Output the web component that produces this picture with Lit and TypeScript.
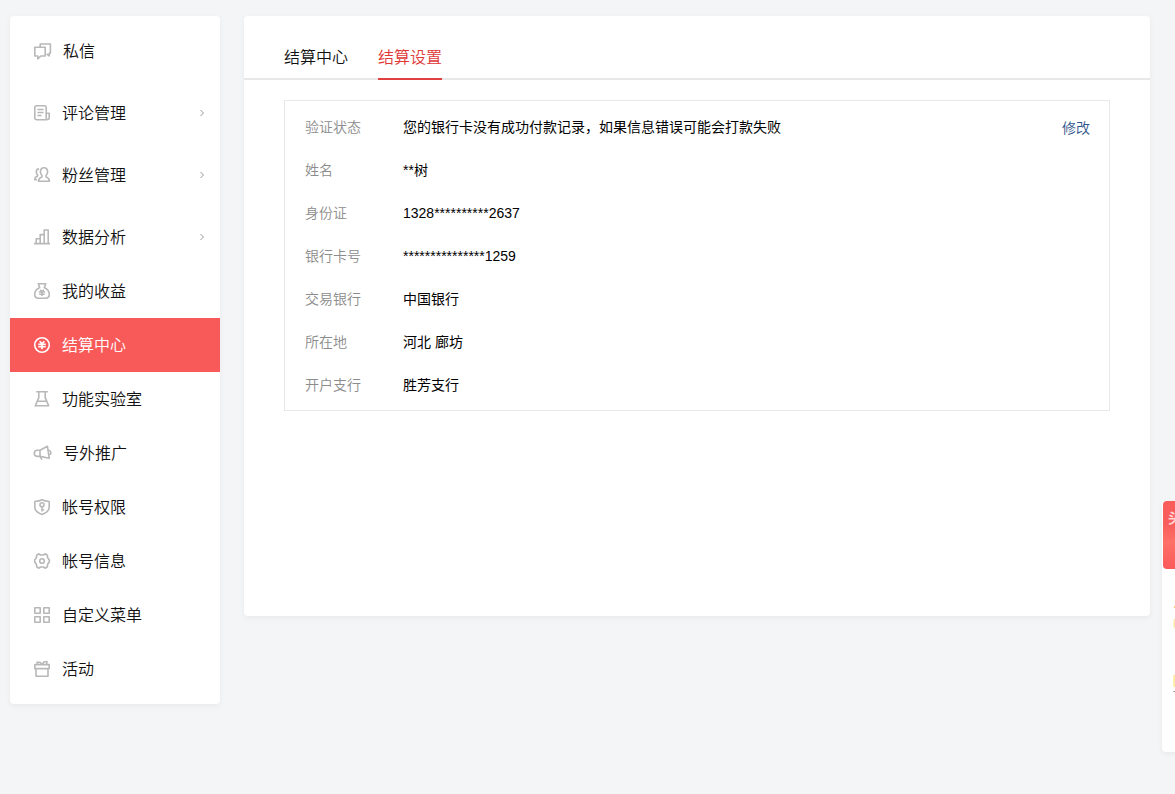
import { LitElement, html, svg, css } from "lit";
import { customElement, property, state } from "lit/decorators.js";
import { classMap } from "lit/directives/class-map.js";

const icons = {
  message: svg`<path d="M6.200 4.200V1H16.400V10.200H15.200V13L12.600 10.900"/><path d="M.8 4.200H11.200V13H6.800L3.800 15.800V13H.8Z"/>`,
  comment: svg`<path d="M13.200 14.700H2.400A1.600 1.600 0 0 1 .8 13.100V2.400A1.600 1.600 0 0 1 2.400.8H10.600A1.600 1.600 0 0 1 12.200 2.400V13A1.500 1.500 0 0 0 15.200 13V8.200H12.200"/><path d="M3.400 4.500H9.600M3.400 7.500H9.600M3.400 10.500H7.600"/>`,
  fans: svg`<path d="M10 .8C7.600.8 6.400 2.400 6.400 4.700C6.400 6.600 7.100 7.700 8 8.500V9.800C6 10.700 4.500 11.600 4.500 14.200H15.400C15.400 11.600 14 10.700 12 9.800V8.500C13 7.700 13.600 6.600 13.600 4.700C13.600 2.400 12.400.8 10 .8Z"/><path d="M5 1.900C3.200 1.900 2.300 3.200 2.300 5C2.300 6.300 2.800 7.300 3.600 8V8.900C1.700 9.700.7 10.500.7 12.800H3"/>`,
  chart: svg`<path d="M0 14.600H16M2.200 14.600V9.800H6.200M6.200 14.600V5.600H10.200M10.200 14.600V1H14.200V14.600"/>`,
  income: svg`<path d="M4.300.8H11.700L10.300 4.600C13 5.800 15.300 8.400 15.300 11.600C15.300 14 13.900 15.200 11.600 15.200H4.400C2.100 15.200.7 14 .7 11.600C.7 8.400 3 5.800 5.700 4.600Z"/><path d="M6.200 6.800L8 8.700L9.800 6.800M4.800 9H11.200M5.200 11.200H10.800M8 9V13"/>`,
  settle: svg`<circle cx="8" cy="8" r="7.300"/><path d="M5.600 4.200L8 6.800L10.400 4.200M4.200 7.200H11.800M4.200 9.600H11.800M8 7V12.200"/>`,
  lab: svg`<path d="M2.200.8H13.800M4.800.8V6.600L1.300 14.800H14.700L11.200 6.600V.8M3.400 10.200H12.600"/>`,
  promote: svg`<path d="M13.400 1.200L6 5.200H3.600A3.100 3.100 0 0 0 3.200 11.400H6.200L15.200 13.200Z"/><path d="M6 5.400V11.200M6.400 11.600L7.800 14.800M14.400 5.200A2.300 2.300 0 0 1 15.200 9.700"/>`,
  shield: svg`<path d="M8 .8C10 2 12.400 2.400 15.200 2.500V8C15.200 11.700 12 14 8 15.400C4 14 .8 11.700 .8 8V2.500C3.600 2.400 6 2 8 .8Z"/><circle cx="8" cy="5.800" r="2"/><path d="M8 7.800V12.400M8 10.800H10.200"/>`,
  gear: svg`<path d="M4.900.8L6.500 2H9.500L11.100.8L13.400 2.200L13.500 4.600L15.300 7V9L13.500 11.400L13.400 13.800L11.100 15.200L9.500 14H6.500L4.900 15.200L2.600 13.800L2.500 11.400L.7 9V7L2.500 4.600L2.600 2.200Z"/><circle cx="8" cy="8" r="2.300"/>`,
  grid: svg`<path d="M.8.800H6.200V6.200H.8ZM9.800.800H15.200V6.200H9.800ZM.8 9.800H6.200V15.200H.8ZM9.800 9.800H15.200V15.200H9.800Z"/>`,
  gift: svg`<path d="M.8 3.600H15.200V7.600H.8ZM2 7.600V15.200H14V7.600M4 3.600L3 1.200H6L8 3.600L10 .8H13L12.400 3.600"/>`,
};

type IconName = keyof typeof icons;

interface NavEntry {
  icon: IconName;
  label: string;
  group?: boolean;
  spaced?: boolean;
  wide?: boolean;
}

const NAV: NavEntry[] = [
  { icon: "message", label: "私信", spaced: true, wide: true },
  { icon: "comment", label: "评论管理", group: true, spaced: true },
  { icon: "fans", label: "粉丝管理", group: true, spaced: true },
  { icon: "chart", label: "数据分析", group: true },
  { icon: "income", label: "我的收益" },
  { icon: "settle", label: "结算中心" },
  { icon: "lab", label: "功能实验室" },
  { icon: "promote", label: "号外推广", wide: true },
  { icon: "shield", label: "帐号权限" },
  { icon: "gear", label: "帐号信息" },
  { icon: "grid", label: "自定义菜单" },
  { icon: "gift", label: "活动" },
];

const DETAILS: [string, string][] = [
  ["验证状态", "您的银行卡没有成功付款记录，如果信息错误可能会打款失败"],
  ["姓名", "**树"],
  ["身份证", "1328**********2637"],
  ["银行卡号", "***************1259"],
  ["交易银行", "中国银行"],
  ["所在地", "河北 廊坊"],
  ["开户支行", "胜芳支行"],
];

@customElement("side-nav")
class SideNav extends LitElement {
  @property() current = "结算中心";

  static styles = css`
    :host {
      display: block;
    }
    .nav {
      padding: 8px 0;
      background: #fff;
      border-radius: 4px;
      box-shadow: 0 2px 6px rgba(0, 0, 0, 0.05);
    }
    .item {
      display: flex;
      align-items: center;
      gap: 12px;
      height: 54px;
      padding: 0 14px 0 24px;
      color: #111;
      font-size: 16px;
      font-weight: 350;
      text-decoration: none;
    }
    .spaced {
      margin-bottom: 8px;
    }
    .active {
      background: #f85959;
      color: #fff;
    }
    .icon {
      flex: none;
      width: 16px;
      height: 16px;
      overflow: visible;
      fill: none;
      stroke: #b8b8b8;
      stroke-width: 1.6;
      stroke-linejoin: round;
    }
    .wide {
      width: 17px;
    }
    .active .icon {
      stroke: #fff;
    }
    .label {
      flex: 1;
      padding-bottom: 2px;
    }
    .arrow {
      width: 8px;
      height: 8px;
      fill: none;
      stroke: #999;
    }
  `;

  render() {
    return html`<nav class="nav">
      ${NAV.map(
        (n) => html`<a
          href="#"
          class=${classMap({ item: true, spaced: !!n.spaced, active: n.label === this.current })}
        >
          <svg
            class=${classMap({ icon: true, wide: !!n.wide })}
            viewBox=${n.wide ? "0 0 17 16" : "0 0 16 16"}
            aria-hidden="true"
          >${icons[n.icon]}</svg>
          <span class="label">${n.label}</span>
          ${n.group
            ? html`<svg class="arrow" viewBox="0 0 8 8" aria-hidden="true"><path d="M2.500 1L5.500 4L2.500 7" /></svg>`
            : ""}
        </a>`
      )}
    </nav>`;
  }
}

@customElement("settle-panel")
class SettlePanel extends LitElement {
  @state() private tab = "结算设置";

  static styles = css`
    :host {
      display: block;
      min-height: 600px;
      background: #fff;
      border-radius: 4px;
      box-shadow: 0 2px 6px rgba(0, 0, 0, 0.05);
    }
    .tabs {
      display: flex;
      gap: 30px;
      padding: 20px 40px 0;
      box-shadow: inset 0 -2px #e8e8e8;
    }
    .tab {
      height: 44px;
      padding: 0 0 2px;
      border: 0;
      border-bottom: 2px solid transparent;
      background: none;
      color: #111;
      font: inherit;
      font-size: 16px;
      font-weight: 350;
      cursor: pointer;
    }
    .selected {
      border-color: #e04040;
      color: #e03838;
    }
    .card {
      display: flex;
      align-items: flex-start;
      margin: 20px 40px;
      padding: 4px 19px 4px 20px;
      border: 1px solid #e8e8e8;
    }
    .list {
      flex: 1;
      margin: 0;
    }
    .row {
      display: flex;
      align-items: center;
      height: 43px;
      font-size: 14px;
      line-height: 20px;
    }
    .term {
      width: 98px;
      color: #8c8c8c;
      font-weight: 350;
    }
    .value {
      margin: 0;
      color: #000;
    }
    .edit {
      color: #30558c;
      font-size: 14px;
      font-weight: 350;
      line-height: 46px;
      text-decoration: none;
    }
  `;

  render() {
    return html`
      <div class="tabs" role="tablist">
        ${["结算中心", "结算设置"].map(
          (t) => html`<button
            role="tab"
            aria-selected=${t === this.tab}
            class=${classMap({ tab: true, selected: t === this.tab })}
            @click=${() => (this.tab = t)}
          >${t}</button>`
        )}
      </div>
      <div class="card">
        <dl class="list">
          ${DETAILS.map(
            ([k, v]) => html`<div class="row"><dt class="term">${k}</dt><dd class="value">${v}</dd></div>`
          )}
        </dl>
        <a class="edit" href="#">修改</a>
      </div>
    `;
  }
}

@customElement("app-root")
class AppRoot extends LitElement {
  static styles = css`
    :host {
      display: block;
      position: relative;
      box-sizing: border-box;
      min-height: 100vh;
      overflow: hidden;
      padding: 16px 25px 16px 10px;
      background: #f4f5f6;
      font-family: "Liberation Sans", "Noto Sans CJK SC", sans-serif;
    }
    .page {
      display: grid;
      grid-template-columns: 210px minmax(0, 1fr);
      align-items: start;
      gap: 24px;
    }
    .float {
      position: absolute;
      top: 501px;
      left: calc(100% - 13px);
      width: 120px;
      height: 251px;
      border-radius: 4px;
      background: #fff;
      box-shadow: 0 2px 6px rgba(0, 0, 0, 0.05);
    }
    .banner {
      height: 68px;
      margin-left: 1px;
      padding: 7px 5px;
      box-sizing: border-box;
      border-radius: 4px;
      background: linear-gradient(#f85d5c 35%, #ff7067 60%, #fa5a5a);
      color: #ffd5d0;
      font-size: 14px;
      font-weight: bold;
      line-height: 20px;
    }
    .art {
      display: block;
      width: 13px;
      height: 130px;
    }
  `;

  render() {
    return html`
      <div class="page">
        <side-nav></side-nav>
        <main><settle-panel></settle-panel></main>
      </div>
      <aside class="float">
        <div class="banner">头</div>
        <svg class="art" viewBox="0 0 13 130" aria-hidden="true">
          <path d="M11.500 39L13 36V39Z" fill="#ffd27a" />
          <path d="M11.500 50H13V59H11.500Z" fill="#ffe9b0" />
          <path d="M11 106H13V118H11Z" fill="#fff0a8" />
          <path d="M11.500 122H13V123H11.500Z" fill="#a08878" />
        </svg>
      </aside>
    `;
  }
}
